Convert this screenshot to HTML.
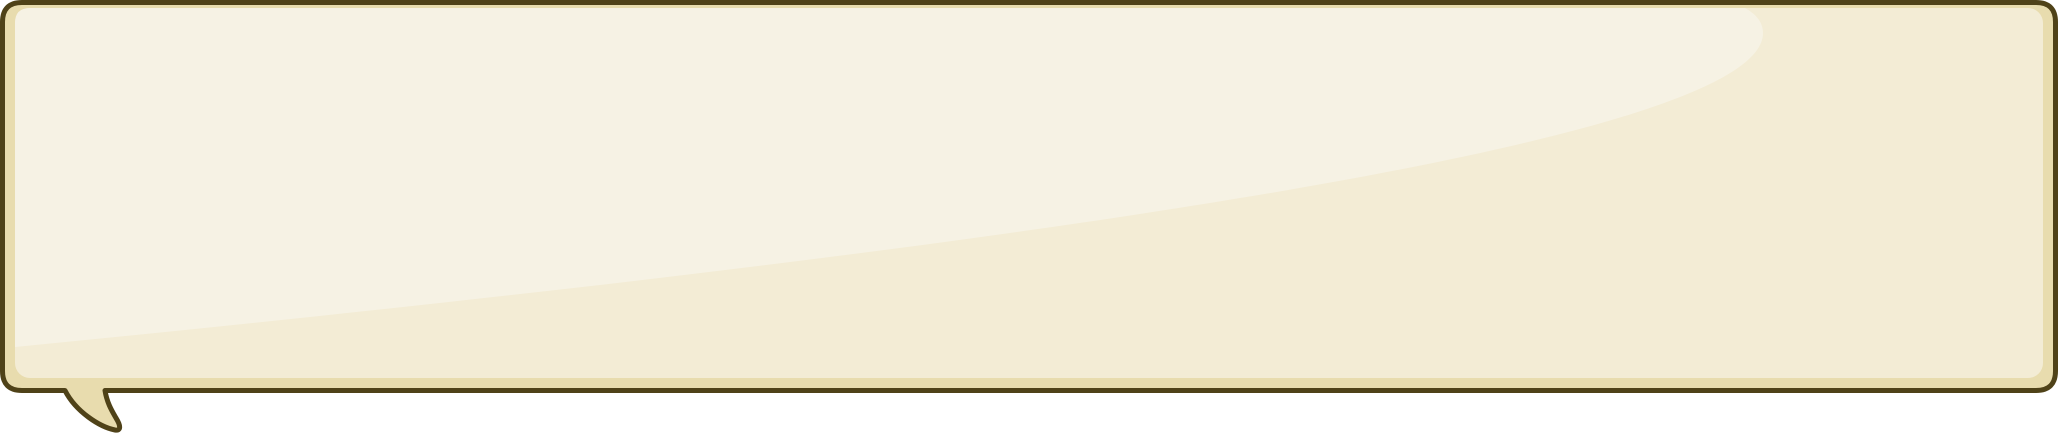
<!DOCTYPE html>
<html><head><meta charset="utf-8"><style>
html,body{margin:0;padding:0;background:#fff;width:2058px;height:433px;overflow:hidden}
svg{display:block}
</style></head><body>
<svg width="2058" height="433" viewBox="0 0 2058 433" xmlns="http://www.w3.org/2000/svg">
<path d="M22,2.5 H2036 Q2055.5,2.5 2055.5,22 V371 Q2055.5,390.5 2036,390.5 H105 C107,403 112,411 116,418 C121,426 121,431 115,430 C100,427 76,412 65,390.5 H22 Q2.5,390.5 2.5,371 V22 Q2.5,2.5 22,2.5 Z" fill="#e8dcae" stroke="#4f4218" stroke-width="5" stroke-linejoin="round"/>
<rect x="15" y="8" width="2028" height="370" rx="15" ry="15" fill="#f3ecd5"/>
<path d="M15,347 V23 Q15,8 30,8 H1745 Q1763,18 1763,33 C1763,150 900,260 15,347 Z" fill="#f6f2e4"/>
</svg>
</body></html>
